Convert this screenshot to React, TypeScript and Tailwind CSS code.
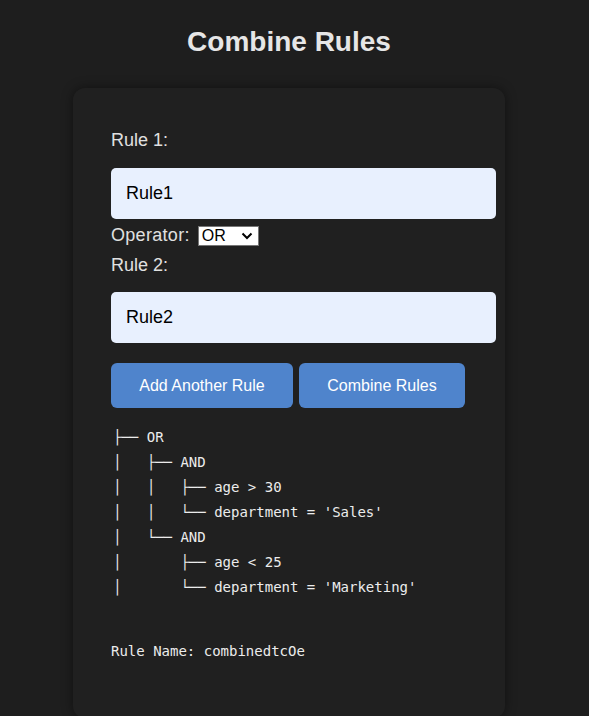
import { useState } from 'react';

const tree = [
  '├── OR',
  '│   ├── AND',
  '│   │   ├── age > 30',
  "│   │   └── department = 'Sales'",
  '│   └── AND',
  '│       ├── age < 25',
  "│       └── department = 'Marketing'",
];

const App = () => {
  const [rules, setRules] = useState(['Rule1', 'Rule2']);
  const [op, setOp] = useState('OR');

  return (
    <div className="min-h-screen bg-[#1e1e1e] pr-[11px] flex flex-col items-center font-['Liberation_Sans',Arial,sans-serif] text-[#e0e0e0]">
      <h1 className="mt-[26px] text-[28px] leading-[32px] font-bold text-[#e6e6e6]">Combine Rules</h1>

      <div className="mt-[30px] w-[432px] bg-[#202020] rounded-[12px] shadow-[0_0_12px_rgba(0,0,0,0.45)] pl-[38px] pt-[42px] pb-[54px]">
        <label className="block text-[18px] leading-[21px]">Rule 1:</label>
        <input
          value={rules[0]}
          onChange={(e) => setRules([e.target.value, rules[1]])}
          className="mt-[17px] block w-[385px] h-[51px] rounded-[5px] bg-[#e8f0fe] px-[15px] text-[18px] text-black outline-none"
        />

        <div className="mt-[6px] flex items-center h-[21px] text-[18px] leading-[21px]">
          <span className="tracking-[0.3px]">Operator:</span>
          <div className="relative ml-[8px] inline-flex">
            <select
              value={op}
              onChange={(e) => setOp(e.target.value)}
              className="appearance-none w-[61px] h-[20px] bg-white text-black text-[16px] leading-[18px] pl-[3px] border border-[#767676] outline-none"
            >
              <option>OR</option>
              <option>AND</option>
            </select>
            <svg className="pointer-events-none absolute right-[6px] top-[6px]" width="12" height="8" viewBox="0 0 12 8">
              <path d="M1.5 1.5 L6 6 L10.5 1.5" fill="none" stroke="#000" strokeWidth="2" />
            </svg>
          </div>
        </div>

        <label className="mt-[9px] block text-[18px] leading-[21px]">Rule 2:</label>
        <input
          value={rules[1]}
          onChange={(e) => setRules([rules[0], e.target.value])}
          className="mt-[16px] block w-[385px] h-[51px] rounded-[5px] bg-[#e8f0fe] px-[15px] text-[18px] text-black outline-none"
        />

        <div className="mt-[20px] flex gap-[6px]">
          <button className="h-[45px] w-[182px] rounded-[6px] bg-[#4f84cc] text-white text-[16px]">
            Add Another Rule
          </button>
          <button className="h-[45px] w-[166px] rounded-[6px] bg-[#4f84cc] text-white text-[16px]">
            Combine Rules
          </button>
        </div>

        <pre className="mt-[17px] ml-[2px] font-['DejaVu_Sans_Mono',monospace] text-[14px] leading-[25px] text-[#ececec]">
          {tree.join('\n')}
        </pre>

        <p className="mt-[39px] font-['DejaVu_Sans_Mono',monospace] text-[14px] leading-[25px] text-[#ececec]">
          Rule Name: combinedtcOe
        </p>
      </div>
    </div>
  );
};

export default App;
